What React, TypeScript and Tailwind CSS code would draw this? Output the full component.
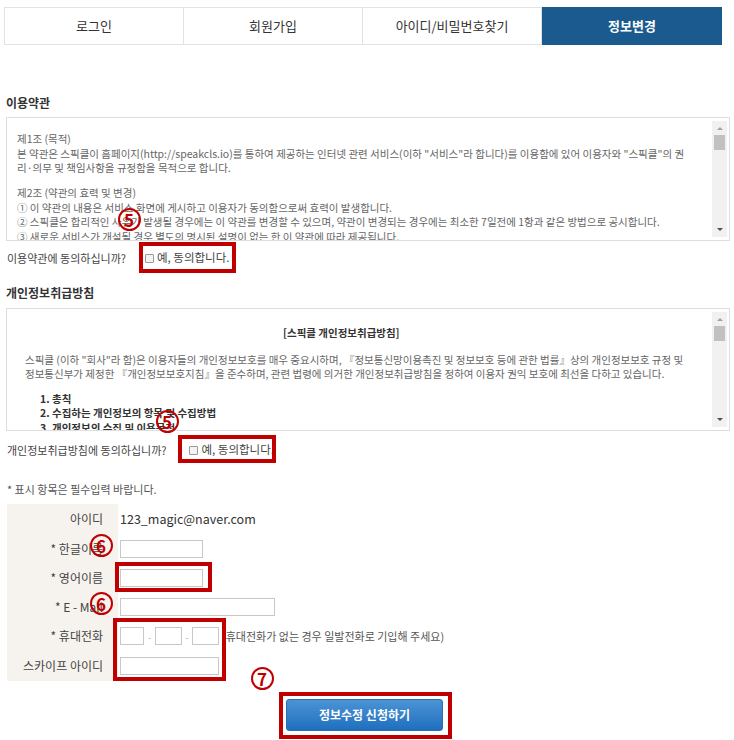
import type { ReactNode } from "react";

const font = { fontFamily: '"Noto Sans CJK KR", "Noto Sans", sans-serif' };

const tabs = ["로그인", "회원가입", "아이디/비밀번호찾기", "정보변경"];

const Scrollbar = () => (
  <div className="w-[15px] my-[3px] mr-[2px] bg-[#f1f1f1] flex flex-col items-center shrink-0">
    <div className="mt-[6px] w-0 h-0 border-l-[3px] border-r-[3px] border-b-[3px] border-l-transparent border-r-transparent border-b-[#a3a3a3]" />
    <div className="mt-[5px] w-[11px] h-[15px] bg-[#c1c1c1]" />
    <div className="flex-1" />
    <div className="mb-[6px] w-0 h-0 border-l-[3px] border-r-[3px] border-t-[3px] border-l-transparent border-r-transparent border-t-[#505050]" />
  </div>
);

const Agree = ({ label }: { label: string }) => (
  <span className="flex items-center gap-[3px] text-[11.5px]">
    <span className="w-[9px] h-[9px] border border-[#999] bg-[#f3f3f3] rounded-[1px]" />
    <span>{label}</span>
  </span>
);

const Circled = ({ n, x, y }: { n: string; x: number; y: number }) => (
  <div
    className="absolute w-[23px] h-[23px] rounded-full border-2 border-[#c00000] flex items-center justify-center text-[#c00000] text-[17px] font-bold leading-none"
    style={{ left: x - 11.5, top: y - 11.5 }}
  >
    {n}
  </div>
);

const RedBox = ({ x, y, w, h }: { x: number; y: number; w: number; h: number }) => (
  <div
    className="absolute border-[4px] border-[#c00000]"
    style={{ left: x, top: y, width: w, height: h }}
  />
);

const Row = ({ label, h, children }: { label: string; h: string; children: ReactNode }) => (
  <div className={`flex ${h}`}>
    <div className="w-[111px] bg-[#f6f3ef] flex items-center justify-end pr-[15px] text-[12px] text-[#444]">
      {label}
    </div>
    <div className="flex items-center pl-[2px] text-[12px] text-[#444]">{children}</div>
  </div>
);

const Input = ({ w }: { w: string }) => (
  <div className={`h-[18px] ${w} border border-[#c8c8c8] bg-white`} />
);

export default function App() {
  return (
    <div className="relative w-[734px] h-[740px] bg-white overflow-hidden" style={font}>
      <div className="mt-[7px] ml-[4px] w-[718px] flex">
        {tabs.map((t, i) => (
          <div
            key={t}
            className={`flex-1 h-[38px] flex items-center justify-center text-[13px] border ${
              i === 3
                ? "bg-[#1a5a8e] border-[#1a5a8e] text-white font-bold"
                : "border-[#e3e3e3] text-[#333]"
            } ${i > 0 && i < 3 ? "border-l-0" : ""}`}
          >
            {t}
          </div>
        ))}
      </div>

      <div className="mt-[50px] ml-[6px] text-[12px] font-bold text-[#333] leading-[16px]">이용약관</div>

      <div className="mt-[6px] ml-[6px] w-[724px] h-[124px] border border-[#dedede] flex">
        <div className="flex-1 overflow-hidden pl-[10px] pt-[14px] text-[10.5px] leading-[14.5px] text-[#666]">
          <p>제1조 (목적)</p>
          <p>
            본 약관은 스픽클이 홈페이지(http://speakcls.io)를 통하여 제공하는 인터넷 관련 서비스(이하 "서비스"라 합니다)를 이용함에 있어 이용자와 "스픽클"의 권
          </p>
          <p>리·의무 및 책임사항을 규정함을 목적으로 합니다.</p>
          <p className="mt-[10.5px]">제2조 (약관의 효력 및 변경)</p>
          <p>① 이 약관의 내용은 서비스 화면에 게시하고 이용자가 동의함으로써 효력이 발생합니다.</p>
          <p>② 스픽클은 합리적인 사유가 발생될 경우에는 이 약관를 변경할 수 있으며, 약관이 변경되는 경우에는 최소한 7일전에 1항과 같은 방법으로 공시합니다.</p>
          <p>③ 새로운 서비스가 개설될 경우 별도의 명시된 설명이 없는 한 이 약관에 따라 제공됩니다.</p>
        </div>
        <Scrollbar />
      </div>

      <div className="mt-[9px] ml-[7px] flex items-center gap-[19px] text-[11px] text-[#444] h-[16px]">
        <span>이용약관에 동의하십니까?</span>
        <Agree label="예, 동의합니다." />
      </div>

      <div className="mt-[19px] ml-[6px] text-[12px] font-bold text-[#333] leading-[16px]">개인정보취급방침</div>

      <div className="mt-[7px] ml-[6px] w-[724px] h-[123px] border border-[#dedede] flex">
        <div className="flex-1 overflow-hidden pl-[18px] pt-[17px] text-[10.5px] leading-[14.5px] text-[#666]">
          <p className="pl-[258px] font-bold text-[#333]">[스픽클 개인정보취급방침]</p>
          <p className="mt-[12px]">
            스픽클 (이하 "회사"라 함)은 이용자들의 개인정보보호를 매우 중요시하며, 『정보통신망이용촉진 및 정보보호 등에 관한 법률』상의 개인정보보호 규정 및
          </p>
          <p>정보통신부가 제정한 『개인정보보호지침』을 준수하며, 관련 법령에 의거한 개인정보취급방침을 정하여 이용자 권익 보호에 최선을 다하고 있습니다.</p>
          <div className="mt-[10px] pl-[15px] font-bold text-[#333]">
            <p>1. 총칙</p>
            <p>2. 수집하는 개인정보의 항목 및 수집방법</p>
            <p>3. 개인정보의 수집 및 이용목적</p>
          </div>
        </div>
        <Scrollbar />
      </div>

      <div className="mt-[11px] ml-[7px] flex items-center gap-[23px] text-[11px] text-[#444] h-[16px]">
        <span>개인정보취급방침에 동의하십니까?</span>
        <Agree label="예, 동의합니다." />
      </div>

      <div className="mt-[23px] ml-[7px] text-[11px] text-[#555] leading-[16px]">* 표시 항목은 필수입력 바랍니다.</div>

      <div className="mt-[7px] ml-[7px]">
        <Row label="아이디" h="h-[30px]">
          <span className="text-[12.5px] text-[#333]">123_magic@naver.com</span>
        </Row>
        <Row label="* 한글이름" h="h-[29px]">
          <Input w="w-[83px]" />
        </Row>
        <Row label="* 영어이름" h="h-[29px]">
          <Input w="w-[83px]" />
        </Row>
        <Row label="* E - Mail" h="h-[29px]">
          <Input w="w-[155px]" />
        </Row>
        <Row label="* 휴대전화" h="h-[30px]">
          <div className="flex items-center">
            <Input w="w-[24px]" />
            <span className="w-[11px] text-center text-[#bbb] text-[10px]">-</span>
            <Input w="w-[27px]" />
            <span className="w-[10px] text-center text-[#bbb] text-[10px]">-</span>
            <Input w="w-[27px]" />
            <span className="ml-[3px] text-[11px] text-[#555]">(휴대전화가 없는 경우 일발전화로 기입해 주세요)</span>
          </div>
        </Row>
        <Row label="스카이프 아이디" h="h-[30px]">
          <Input w="w-[99px]" />
        </Row>
      </div>

      <div className="mt-[18px] ml-[286px] w-[157px] h-[32px] rounded-[3px] bg-gradient-to-b from-[#4a93d4] to-[#1f6fbf] border border-[#2a6fb0] flex items-center justify-center text-white text-[12px] font-bold">
        정보수정 신청하기
      </div>

      <RedBox x={139} y={242} w={97} h={31} />
      <RedBox x={178} y={435} w={98} h={28} />
      <RedBox x={115} y={562} w={97} h={30} />
      <RedBox x={113} y={618} w={113} h={63} />
      <RedBox x={279} y={692} w={173} h={47} />

      <Circled n="5" x={129} y={219} />
      <Circled n="5" x={167} y={421} />
      <Circled n="6" x={101} y={545} />
      <Circled n="6" x={101} y={603} />
      <Circled n="7" x={262} y={678} />
    </div>
  );
}
